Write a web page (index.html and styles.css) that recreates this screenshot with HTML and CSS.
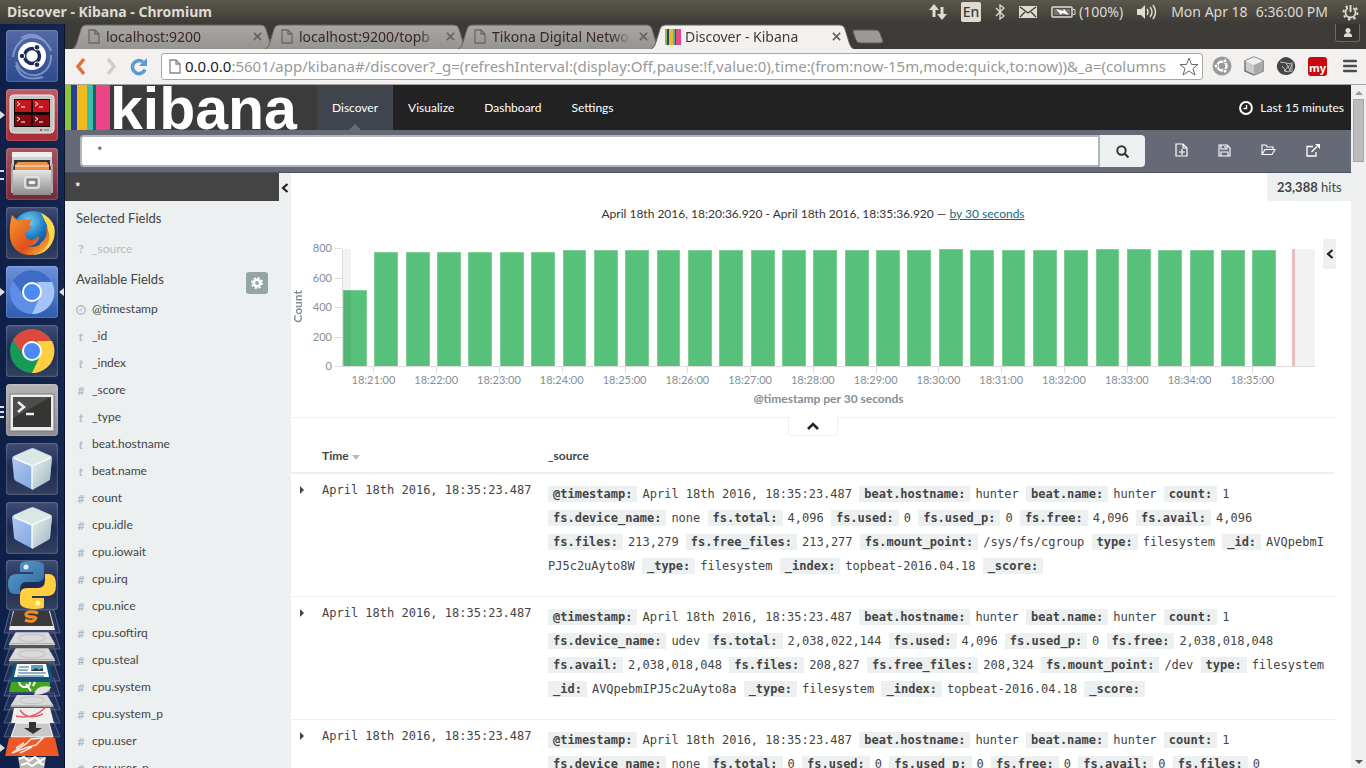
FILE: index.html
```html
<!DOCTYPE html>
<html lang="en">
<head>
<meta charset="utf-8">
<title>Discover - Kibana</title>
<link rel="stylesheet" href="styles.css">
</head>
<body>
<svg class="defs" aria-hidden="true">
  <defs>
    <linearGradient id="metal" x1="0" y1="0" x2="0" y2="1"><stop offset="0" stop-color="#e4e4e4"/><stop offset="1" stop-color="#8d8d8d"/></linearGradient>
    <linearGradient id="tabfill" x1="0" y1="0" x2="0" y2="1"><stop offset="0" stop-color="#a9a7a4"/><stop offset="1" stop-color="#96948f"/></linearGradient>
    <linearGradient id="pyb" x1="0" y1="0" x2="1" y2="1"><stop offset="0" stop-color="#5aa1d8"/><stop offset="1" stop-color="#2d6596"/></linearGradient>
    <linearGradient id="fox" x1="0" y1="0" x2="1" y2="1"><stop offset="0" stop-color="#f59a2a"/><stop offset=".6" stop-color="#e2501c"/><stop offset="1" stop-color="#f8c93a"/></linearGradient>
    <radialGradient id="globe" cx=".4" cy=".25" r=".8"><stop offset="0" stop-color="#6fd0f2"/><stop offset=".5" stop-color="#1c77bd"/><stop offset="1" stop-color="#0b2f66"/></radialGradient>
    <linearGradient id="cubel" x1="0" y1="0" x2="1" y2="1"><stop offset="0" stop-color="#b9cff2"/><stop offset="1" stop-color="#6f97dd"/></linearGradient>
    <linearGradient id="cuber" x1="0" y1="0" x2="1" y2="1"><stop offset="0" stop-color="#e8f0f0"/><stop offset="1" stop-color="#9db4bd"/></linearGradient>
    <symbol id="page" viewBox="0 0 12 15"><path d="M1 1h6l4 4v9H1zM7 1v4h4" fill="none" stroke="currentColor" stroke-width="1.300"/></symbol>
    <symbol id="x" viewBox="0 0 10 10"><path d="M1 1l8 8M9 1l-8 8" fill="none" stroke="currentColor" stroke-width="1.800"/></symbol>
    <symbol id="tabshape" viewBox="0 0 203 25" preserveAspectRatio="none"><path d="M0 25C3 24 4 21 5 18L9 5Q10 1 14 1H189Q193 1 194 5L198 18C199 21 200 24 203 25" stroke="#64625d"/></symbol>
    <symbol id="caret" viewBox="0 0 6 8"><path d="M1 0l4 4-4 4z" fill="currentColor"/></symbol>
    <symbol id="left" viewBox="0 0 8 10"><path d="M6.500 1L2 5l4.500 4" fill="none" stroke="currentColor" stroke-width="2.200"/></symbol>
    <symbol id="clock" viewBox="0 0 14 14"><circle cx="7" cy="7" r="5.900" fill="none" stroke="currentColor" stroke-width="2"/><path d="M7.500 4v3.500H4.500" fill="none" stroke="currentColor" stroke-width="1.400"/></symbol>
    <symbol id="cube" viewBox="0 0 52 52"><path d="M8 13Q26 4 27 5q1 0 18 8 1 1 1 2l-2 20q0 2-2 3L28 46q-2 1-3 0L10 38q-2-1-2-3L6 15q0-1 2-2z" fill="url(#cubel)"/><path d="M8 13l17-7q2-1 3 0l17 7q1 1 0 2l-18 8q-1 1-2 0L8 15q-1-1 0-2z" fill="#d9e8e3"/><path d="M26 23l20-9-2 22q0 1-2 2l-16 9z" fill="url(#cuber)"/><path d="M8 15l18 8 18-8M26 23v23" fill="none" stroke="#f4fbff" stroke-width="1.500"/></symbol>
    <symbol id="drive" viewBox="0 0 50 18"><path d="M8 1h34l7 12H1z" fill="#d9d9d9"/><ellipse cx="25" cy="7" rx="14" ry="4" fill="none" stroke="#bdbdbd"/><path d="M1 13h48v4H1z" fill="#555"/><path d="M1 13h48v1H1z" fill="#fff"/></symbol>
  </defs>
</svg>

<header class="panel">
  <span class="panel-title">Discover - Kibana - Chromium</span>
  <div class="tray">
    <svg width="18" height="18" viewBox="0 0 18 18"><path d="M5 1l5 6H6.500v7h-3V7H0zM13 17l-5-6h3.500V4h3v7H18z" fill="#dfdbd2"/></svg>
    <span class="lang">En</span>
    <svg width="10" height="16" viewBox="0 0 10 16"><path d="M1 4l8 8-4 3V1l4 3-8 8" fill="none" stroke="#dfdbd2" stroke-width="1.300"/></svg>
    <svg width="18" height="14" viewBox="0 0 18 14"><path d="M0 1h18v12H0z" fill="#dfdbd2"/><path d="M1 2l8 6 8-6M1 12l5-5M17 12l-5-5" fill="none" stroke="#3d3b37" stroke-width="1.300"/></svg>
    <span class="battery"><svg width="25" height="12" viewBox="0 0 25 12"><rect x="1" y="1" width="20" height="10" rx="1" fill="none" stroke="#dfdbd2" stroke-width="1.500"/><path d="M3 3h16v6H3z" fill="#77756f"/><path d="M22 3.500h2v5h-2" fill="none" stroke="#dfdbd2"/><path d="M5 3l7 2 1-2 5 6-7-2-1 2z" fill="#fff"/></svg>(100%)</span>
    <svg width="20" height="16" viewBox="0 0 20 16"><path d="M0 5h4l4-4v14l-4-4H0z" fill="#dfdbd2"/><path d="M10 5q2 3 0 6M13 3q4 5 0 10M16 1q5 7 0 14" fill="none" stroke="#dfdbd2" stroke-width="1.500"/></svg>
    <span class="date"><span>Mon Apr 18</span><span>6:36:00 PM</span></span>
    <svg width="17" height="17" viewBox="0 0 17 17"><circle cx="8.500" cy="8.500" r="5" fill="none" stroke="#dfdbd2" stroke-width="1.800"/><circle cx="8.500" cy="8.500" r="7" fill="none" stroke="#dfdbd2" stroke-width="2" stroke-dasharray="2.500 3"/><path d="M6 0h5v7H6z" fill="#4a4843"/><path d="M8.500 1v7" stroke="#dfdbd2" stroke-width="2"/></svg>
  </div>
</header>

<div class="desktop">
<aside class="launcher" aria-label="Launcher">
  <button class="tile blue" aria-label="Dash"><svg viewBox="0 0 52 52"><path d="M7 27C10 3 37 0 45 21M45 25C46 48 18 53 10 32M15 8q17-10 30 12M10 35q5 18 27 12" fill="none" stroke="#9daed8" stroke-width="2" opacity=".7"/><circle cx="26" cy="26" r="14" fill="#fff"/><circle cx="26" cy="26" r="7.500" fill="none" stroke="#1c2c5c" stroke-width="3.500"/><g fill="#1c2c5c" stroke="#fff"><circle cx="16" cy="26" r="2.800"/><circle cx="31" cy="17.300" r="2.800"/><circle cx="31" cy="34.700" r="2.800"/></g></svg></button>
  <button class="tile red run" aria-label="Terminator"><svg viewBox="0 0 52 52"><path d="M7 6h38q3 0 3 4v30q0 4-4 4H8q-4 0-4-4V10q0-4 3-4z" fill="#c5c7c2" stroke="#eee"/><path d="M8 10h36v28H8z" fill="#160405"/><path d="M9 11h16v12H9zM27 11h16v12H27z" fill="#c31720"/><path d="M9 26h16v11H9zM27 26h16v11H27z" fill="#830a10"/><path d="M11 13l3 2-3 2M15 18h4M29 13l3 2-3 2M33 18h4M11 28l3 2-3 2M15 33h4M29 28l3 2-3 2M33 33h4" stroke="#fff" fill="none"/><circle cx="35" cy="41" r="1" fill="red"/><path d="M38 40h5v2h-5z" fill="#999"/></svg></button>
  <button class="tile wine run2" aria-label="Files"><svg viewBox="0 0 52 52"><path d="M6 4h40v14H6z" fill="#d0d0d0"/><path d="M6 4h40v5H6z" fill="#eee"/><path d="M8 12h36v12H8z" fill="#333"/><path d="M9 17l3-3h29l2 3v7H9z" fill="#e8924a"/><path d="M9 18h34" stroke="#fff0d8"/><path d="M5 16h2v29H5zM45 16h2v29h-2z" fill="#aaa"/><path d="M7 22h38v25H7z" fill="url(#metal)"/><rect x="19" y="29" width="14" height="11" rx="2" fill="#aaa" stroke="#eee" stroke-width="1.500"/><path d="M22 32h8v5h-8z" fill="#eee" stroke="#444"/></svg></button>
  <button class="tile dim" aria-label="Firefox"><svg viewBox="0 0 52 52"><circle cx="27" cy="25" r="21" fill="url(#globe)"/><path d="M35 6Q52 14 48 31 43 47 27 48l8-12q8-6 6-18z" fill="#ffd94a"/><path d="M6 8l6 6q4-3 9-1l5-1-3 6 3 2-6 4q-2 5 2 8 5 3 10-3l1 3q-4 8-12 7 12 3 18-7 3-8 0-14 7 10 3 19-6 12-20 11Q7 46 4 31 3 18 6 8z" fill="url(#fox)"/></svg></button>
  <button class="tile sky run active" aria-label="Chromium"><svg viewBox="0 0 52 52"><circle cx="26" cy="26" r="22" fill="#5d8fe8"/><path d="M7 15A22 22 0 0 1 46 17H26a9 9 0 0 0-8 13z" fill="#3f6cc6"/><path d="M46 16A22 22 0 0 1 26 48l8-17q2-8-3-15z" fill="#a3c3f9"/><circle cx="26" cy="26" r="9" fill="#4a8af4" stroke="#fff" stroke-width="2"/></svg></button>
  <button class="tile dim" aria-label="Chrome"><svg viewBox="0 0 52 52"><circle cx="26" cy="26" r="22" fill="#169a57"/><path d="M7 15A22 22 0 0 1 46 17H26a9 9 0 0 0-8 13z" fill="#dc4a3f"/><path d="M46 16A22 22 0 0 1 26 48l8-17q2-8-3-15z" fill="#ffcf40"/><circle cx="26" cy="26" r="9" fill="#4a8af4" stroke="#fff" stroke-width="2"/></svg></button>
  <button class="tile grey run3" aria-label="Terminal"><svg viewBox="0 0 52 52"><path d="M4 10h44v37H4z" fill="#eee" stroke="#777"/><path d="M7 13h38v30H7z" fill="#353534"/><path d="M7 13h38L7 34z" fill="#fff" opacity=".12"/><path d="M12 18l6 5-6 5M20 30h8" fill="none" stroke="#eee" stroke-width="2.500"/></svg></button>
  <button class="tile dim" aria-label="NetBeans"><svg><use href="#cube"/></svg></button>
  <button class="tile dim" aria-label="NetBeans IDE"><svg><use href="#cube"/></svg></button>
  <button class="tile dim python" aria-label="Python"><svg viewBox="0 0 52 50"><path d="M14 5q0-4 12-4 12 0 12 5v9q0 7-7 7H20q-6 0-6 8v4H9Q2 34 2 24t8-10h17v-2H14z" fill="url(#pyb)"/><path d="M38 47q0 2-12 2-12-1-12-6v-8q0-7 7-7h11q7 0 7-8v-6h4q7 0 7 11t-8 11H26v2h12z" fill="#ffcf3f"/><circle cx="20" cy="7" r="2.500" fill="#eee"/><circle cx="32" cy="43" r="2.500" fill="#fff4a0"/></svg></button>
  <svg class="fold" width="65" height="160" viewBox="0 0 65 160" aria-label="More applications">
    <g fill="#39446c" fill-opacity=".45" stroke="#7681a5" stroke-opacity=".6"><path d="M10 1h44l6 23H4zM10 22h44l6 18H4zM10 38h44l6 18H4zM10 54h44l6 18H4zM10 69h44l6 18H4zM10 84h44l6 17H4zM10 99h44l6 15H4zM10 113h44l6 15H4z"/></g>
    <path d="M13 2h37l5 19H9z" fill="#eee"/><path d="M14 2h35l4 15H10z" fill="#3a3a3a"/><path d="M38 4q-10-3-12 1-1 3 8 3 4 1-1 4-3 1-8-1" fill="none" stroke="#f58b22" stroke-width="3"/>
    <use href="#drive" x="8" y="22" width="48" height="18"/><use href="#drive" x="8" y="38" width="48" height="18"/>
    <path d="M14 54h35l4 18H10z" fill="#145478"/><path d="M17 55h29l3 13H14z" fill="#fff"/><path d="M19 58h10M18 61h10M18 64h28M17 67h27" stroke="#1f658a"/><path d="M31 56h12v6H31z" fill="#52a5c9"/><path d="M31 62l5-3 3 2 4-2v3z" fill="#333"/>
    <path d="M11 73h39v10H9z" fill="#43a51e"/><path d="M19 73q1 5 6 5t5-5M26 75l5 7M35 73l-2 4" stroke="#fff" stroke-width="2" fill="none"/><path d="M34 86q2-11 17-8-3 8-17 8z" fill="#e2e4df"/>
    <use href="#drive" x="8" y="85" width="48" height="16"/>
    <path d="M14 99h36l4 15H11z" fill="#eee"/><path d="M16 107q16 4 29-8M20 101q7 11 23 4" stroke="#e06068" stroke-width="1.500" fill="none"/>
    <path d="M16 114h33l4 14H11z" fill="#c9c9c9" stroke="#fff"/><path d="M29 113h7v6h6l-9 6-9-6h5z" fill="#333"/>
    <path d="M9 129h46l4 18H5z" fill="#ee5825"/><path d="M12 144l14-9 5-5 12-1-7 7-8 2zM20 144l12-6M16 139l8-5" stroke="#fbe6da" stroke-width="1.500" fill="none"/>
    <path d="M18 148h28l-2 12H20z" fill="#b8b8b4"/><path d="M19 150l5-2 5 4 6-4 5 4 5-3M21 156l6-2 5 3 6-4 6 3" stroke="#fff" stroke-width="2" fill="none"/><path d="M0 135l5 4-5 4z" fill="#ddd"/>
  </svg>
</aside>

<div class="browser">
  <div class="tabstrip">
    <div class="tab"><svg class="shape" fill="url(#tabfill)"><use href="#tabshape"/></svg><svg class="fav"><use href="#page"/></svg><span class="tab-name">localhost:9200</span><button class="close" aria-label="Close"><svg><use href="#x"/></svg></button></div>
    <div class="tab"><svg class="shape" fill="url(#tabfill)"><use href="#tabshape"/></svg><svg class="fav"><use href="#page"/></svg><span class="tab-name">localhost:9200/topb</span><button class="close" aria-label="Close"><svg><use href="#x"/></svg></button></div>
    <div class="tab"><svg class="shape" fill="url(#tabfill)"><use href="#tabshape"/></svg><svg class="fav"><use href="#page"/></svg><span class="tab-name">Tikona Digital Netwo</span><button class="close" aria-label="Close"><svg><use href="#x"/></svg></button></div>
    <div class="tab current"><svg class="shape" fill="#f2f1f0"><use href="#tabshape"/></svg><svg class="fav wide" viewBox="0 0 16 16"><path d="M0 0h2v16H0z" fill="#8ac43f"/><path d="M2 0h2v16H2z" fill="#2b3f91"/><path d="M4 0h4v16H4z" fill="#f2b91c"/><path d="M8 0h2v16H8z" fill="#3bbeb2"/><path d="M10 0h1v16h-1z" fill="#0a6a60"/><path d="M11 0h5v16h-5z" fill="#ea4589"/></svg><span class="tab-name">Discover - Kibana</span><button class="close" aria-label="Close"><svg><use href="#x"/></svg></button></div>
    <button class="newtab" aria-label="New tab"><svg width="32" height="15" viewBox="0 0 32 15"><path d="M2 1h22q3 0 4 3l3 8q0 2-2 2H8q-3 0-4-3L1 3q0-2 1-2z" fill="#9b9994" stroke="#5c5a55"/></svg></button>
    <button class="profile" aria-label="Profile"><svg width="10" height="10" viewBox="0 0 10 10"><circle cx="5" cy="2.500" r="2.500" fill="#dfdbd2"/><path d="M1 9V7q1-2 4-2t4 2v2z" fill="#dfdbd2"/></svg></button>
  </div>
  <div class="toolbar">
    <button aria-label="Back"><svg width="12" height="19" viewBox="0 0 12 19"><path d="M9 2L3 9.500l6 7.500" fill="none" stroke="#e2703a" stroke-width="3.500"/></svg></button>
    <button aria-label="Forward"><svg width="12" height="19" viewBox="0 0 12 19"><path d="M2 2l6 7.500L2 17" fill="none" stroke="#cfcdc9" stroke-width="3.500"/></svg></button>
    <button aria-label="Reload"><svg width="18" height="19" viewBox="0 0 18 19"><path d="M15 12.500A6.500 6.500 0 1 1 13 5" fill="none" stroke="#5b9bd3" stroke-width="3.500"/><path d="M17 1v8H9z" fill="#5b9bd3"/></svg></button>
    <div class="omnibox"><svg class="fav" width="12" height="15"><use href="#page"/></svg><div class="url"><b>0.0.0.0</b>:5601/app/kibana#/discover?_g=(refreshInterval:(display:Off,pause:!f,value:0),time:(from:now-15m,mode:quick,to:now))&amp;_a=(columns</div><svg width="20" height="19" viewBox="0 0 20 19"><path d="M10 1l2.500 6.500H19l-5 4 2 6.500-6-4-6 4 2-6.500-5-4h6.500z" fill="#fff" stroke="#666"/></svg></div>
    <div class="extensions">
      <svg width="20" height="20" viewBox="0 0 20 20"><circle cx="10" cy="10" r="9.500" fill="#999"/><circle cx="10" cy="10" r="4.500" fill="none" stroke="#fff" stroke-width="2.500"/><g fill="#fff" stroke="#999"><circle cx="4" cy="10" r="2"/><circle cx="13" cy="4.800" r="2"/><circle cx="13" cy="15.200" r="2"/></g></svg>
      <svg width="20" height="20" viewBox="0 0 20 20"><path d="M1 5l9-4 9 4v10l-9 4-9-4z" fill="#ccc" stroke="#777" stroke-width="1.500"/><path d="M1 5l9 4 9-4-9-4z" fill="#eee"/><path d="M10 9v10l9-4V5z" fill="#aaa"/></svg>
      <svg width="20" height="20" viewBox="0 0 20 20"><path d="M5 3q5-4 10 0 5 3 4 9-2 7-9 7t-9-7q-1-5 4-9z" fill="#444"/><path d="M4 6l12 2-3 8-5-1 6-6M6 10l5 6M10 7l5 9M16 6v10" stroke="#bbb" fill="none"/></svg>
      <span class="my">my</span>
      <svg width="14" height="14" viewBox="0 0 14 14"><path d="M1 2h12M1 7h12M1 12h12" stroke="#4c4c4c" stroke-width="2.500" stroke-linecap="round"/></svg>
    </div>
  </div>

  <div class="viewport">
  <div class="app">
    <nav class="navbar">
      <a class="logo" href="#" aria-label="Kibana"><span class="stripes"></span><span class="word">kibana</span></a>
      <a class="nav on" href="#">Discover</a><a class="nav" href="#">Visualize</a><a class="nav" href="#">Dashboard</a><a class="nav" href="#">Settings</a>
      <button class="range"><svg width="14" height="14"><use href="#clock"/></svg>Last 15 minutes</button>
    </nav>
    <form class="query">
      <input type="text" value="*" aria-label="Search"><button class="go" type="button" aria-label="Submit search"><svg width="13" height="13" viewBox="0 0 13 13"><circle cx="5.500" cy="5.500" r="4.200" fill="none" stroke="#333" stroke-width="2"/><path d="M8.500 8.500l4 4" stroke="#333" stroke-width="2.200"/></svg></button>
      <div class="actions">
        <button type="button" aria-label="New search"><svg width="13" height="14" viewBox="0 0 13 14"><path d="M1 1h7l4 4v8H1zM8 1v4h4M7 6v6M4 9h6" fill="none" stroke="#fff" stroke-width="1.200"/></svg></button>
        <button type="button" aria-label="Save search"><svg width="13" height="13" viewBox="0 0 13 13"><path d="M1 1h8l3 3v8H1zM3 1v4h6V1M3 12V8h7v4M7 2v2" fill="none" stroke="#fff" stroke-width="1.100"/></svg></button>
        <button type="button" aria-label="Load search"><svg width="15" height="12" viewBox="0 0 15 12"><path d="M1 10V1h4l1 2h6v2M1 10.500l3-5h10l-3 5z" fill="none" stroke="#fff" stroke-width="1.100"/></svg></button>
        <button type="button" aria-label="Share"><svg width="14" height="13" viewBox="0 0 14 13"><path d="M7 2.500H1V12h9V8M5.500 8L11 2.500" fill="none" stroke="#fff" stroke-width="1.300"/><path d="M9 0h5v5z" fill="#fff"/></svg></button>
      </div>
    </form>
    <div class="columns">
      <aside class="sidebar">
        <div class="fields">
          <div class="index">*</div>
          <h2>Selected Fields</h2>
          <ul><li class="muted"><i class="q">?</i>_source</li></ul>
          <div class="available"><h2>Available Fields</h2><button aria-label="Field settings"><svg width="12" height="12" viewBox="0 0 12 12"><circle cx="6" cy="6" r="3.200" fill="none" stroke="#fff" stroke-width="2.600"/><circle cx="6" cy="6" r="5" fill="none" stroke="#fff" stroke-width="2" stroke-dasharray="2 1.930"/></svg></button></div>
          <ul>
            <li><i><svg width="10" height="10"><use href="#clock"/></svg></i>@timestamp</li>
            <li><i>t</i>_id</li><li><i>t</i>_index</li><li><i class="n">#</i>_score</li><li><i>t</i>_type</li><li><i>t</i>beat.hostname</li><li><i>t</i>beat.name</li>
            <li><i class="n">#</i>count</li><li><i class="n">#</i>cpu.idle</li><li><i class="n">#</i>cpu.iowait</li><li><i class="n">#</i>cpu.irq</li><li><i class="n">#</i>cpu.nice</li><li><i class="n">#</i>cpu.softirq</li><li><i class="n">#</i>cpu.steal</li><li><i class="n">#</i>cpu.system</li><li><i class="n">#</i>cpu.system_p</li><li><i class="n">#</i>cpu.user</li><li><i class="n">#</i>cpu.user_p</li>
          </ul>
        </div>
        <button class="collapse" aria-label="Collapse sidebar"><svg width="8" height="10"><use href="#left"/></svg></button>
      </aside>
      <main class="results">
        <div class="hits"><b>23,388</b> hits</div>
        <div class="span">April 18th 2016, 18:20:36.920 - April 18th 2016, 18:35:36.920 — <a href="#">by 30 seconds</a></div>
        <section class="chart">
          <div class="ytitle"><span>Count</span></div>
          <div class="yaxis"><span>800</span><span>600</span><span>400</span><span>200</span><span>0</span></div>
          <div class="plotcol">
            <div class="plot" id="plot"><div class="early"></div><div class="late"></div></div>
            <div class="xaxis"><span>18:21:00</span><span>18:22:00</span><span>18:23:00</span><span>18:24:00</span><span>18:25:00</span><span>18:26:00</span><span>18:27:00</span><span>18:28:00</span><span>18:29:00</span><span>18:30:00</span><span>18:31:00</span><span>18:32:00</span><span>18:33:00</span><span>18:34:00</span><span>18:35:00</span></div>
            <div class="xtitle">@timestamp per 30 seconds</div>
          </div>
          <button class="legend" aria-label="Toggle legend"><svg width="8" height="10"><use href="#left"/></svg></button>
        </section>
        <div class="fold-row"><button aria-label="Collapse chart"><svg width="12" height="8" viewBox="0 0 12 8"><path d="M1 7l5-5 5 5" fill="none" stroke="#222" stroke-width="2.600"/></svg></button></div>
        <table>
          <colgroup><col class="c1"><col class="c2"><col></colgroup>
          <thead><tr><th></th><th>Time <svg width="8" height="5" viewBox="0 0 8 5"><path d="M0 0h8L4 5z" fill="#b4bcc2"/></svg></th><th>_source</th></tr></thead>
          <tbody>
          <tr><td><svg width="6" height="8"><use href="#caret"/></svg></td><td>April 18th 2016, 18:35:23.487</td><td><dl><dt>@timestamp:</dt><dd>April 18th 2016, 18:35:23.487</dd> <dt>beat.hostname:</dt><dd>hunter</dd> <dt>beat.name:</dt><dd>hunter</dd> <dt>count:</dt><dd>1</dd> <dt>fs.device_name:</dt><dd>none</dd> <dt>fs.total:</dt><dd>4,096</dd> <dt>fs.used:</dt><dd>0</dd> <dt>fs.used_p:</dt><dd>0</dd> <dt>fs.free:</dt><dd>4,096</dd> <dt>fs.avail:</dt><dd>4,096</dd> <dt>fs.files:</dt><dd>213,279</dd> <dt>fs.free_files:</dt><dd>213,277</dd> <dt>fs.mount_point:</dt><dd>/sys/fs/cgroup</dd> <dt>type:</dt><dd>filesystem</dd> <dt>_id:</dt><dd>AVQpebmIPJ5c2uAyto8W</dd> <dt>_type:</dt><dd>filesystem</dd> <dt>_index:</dt><dd>topbeat-2016.04.18</dd> <dt>_score:</dt></dl></td></tr>
          <tr><td><svg width="6" height="8"><use href="#caret"/></svg></td><td>April 18th 2016, 18:35:23.487</td><td><dl><dt>@timestamp:</dt><dd>April 18th 2016, 18:35:23.487</dd> <dt>beat.hostname:</dt><dd>hunter</dd> <dt>beat.name:</dt><dd>hunter</dd> <dt>count:</dt><dd>1</dd> <dt>fs.device_name:</dt><dd>udev</dd> <dt>fs.total:</dt><dd>2,038,022,144</dd> <dt>fs.used:</dt><dd>4,096</dd> <dt>fs.used_p:</dt><dd>0</dd> <dt>fs.free:</dt><dd>2,038,018,048</dd> <dt>fs.avail:</dt><dd>2,038,018,048</dd> <dt>fs.files:</dt><dd>208,827</dd> <dt>fs.free_files:</dt><dd>208,324</dd> <dt>fs.mount_point:</dt><dd>/dev</dd> <dt>type:</dt><dd>filesystem</dd> <dt>_id:</dt><dd>AVQpebmIPJ5c2uAyto8a</dd> <dt>_type:</dt><dd>filesystem</dd> <dt>_index:</dt><dd>topbeat-2016.04.18</dd> <dt>_score:</dt></dl></td></tr>
          <tr><td><svg width="6" height="8"><use href="#caret"/></svg></td><td>April 18th 2016, 18:35:23.487</td><td><dl><dt>@timestamp:</dt><dd>April 18th 2016, 18:35:23.487</dd> <dt>beat.hostname:</dt><dd>hunter</dd> <dt>beat.name:</dt><dd>hunter</dd> <dt>count:</dt><dd>1</dd> <dt>fs.device_name:</dt><dd>none</dd> <dt>fs.total:</dt><dd>0</dd> <dt>fs.used:</dt><dd>0</dd> <dt>fs.used_p:</dt><dd>0</dd> <dt>fs.free:</dt><dd>0</dd> <dt>fs.avail:</dt><dd>0</dd> <dt>fs.files:</dt><dd>0</dd></dl></td></tr>
          </tbody>
        </table>
      </main>
    </div>
  </div>
  <div class="scrollbar"><span class="arrow"></span><span class="thumb"></span><span class="arrow down"></span></div>
  </div>
</div>
</div>
<script src="chart.js"></script>
</body>
</html>
```
FILE: styles.css
```css
* { box-sizing: border-box; }
body { margin: 0; height: 100vh; overflow: hidden; display: flex; flex-direction: column; font: 13px/20px Lato, sans-serif; color: #444; background: #fff; }
button { border: 0; background: none; padding: 0; margin: 0; font: inherit; color: inherit; display: flex; align-items: center; justify-content: center; }
svg { flex: none; }
h2, ul, dl, dd { margin: 0; padding: 0; }
.defs { position: absolute; width: 0; height: 0; }

/* Desktop panel */
.panel { flex: none; height: 24px; display: flex; align-items: center; justify-content: space-between; padding: 0 7px; background: linear-gradient(#5a574c, #3d3b37); color: #dfdbd2; font: 14px/24px "Noto Sans", sans-serif; }
.panel-title { font-weight: 700; }
.tray { display: flex; align-items: center; gap: 14px; }
.lang { width: 20px; height: 20px; background: #dfdbd2; color: #3d3b37; border-radius: 2px; line-height: 20px; text-align: center; font-weight: 500; }
.battery { display: flex; align-items: center; gap: 3px; }
.date { display: flex; gap: 8px; }

.desktop { flex: 1; min-height: 0; display: flex; }
.launcher { flex: none; width: 65px; padding-top: 6px; display: flex; flex-direction: column; align-items: center; gap: 7px; background: linear-gradient(90deg, #0e2047, #15264f); overflow: hidden; border-right: 1px solid #0a1228; }
.tile { flex: none; position: relative; width: 52px; height: 52px; border-radius: 4px; box-shadow: inset 0 0 2px #ffffff88; }
.tile svg { width: 52px; height: 52px; }
.blue { background: linear-gradient(#5568a5, #2e4b92); }
.red { background: linear-gradient(#c05c63, #a82c35); }
.wine { background: linear-gradient(#a85560, #762734); }
.dim { background: linear-gradient(#414c72, #1d2b55 50%, #34405f); }
.sky { background: linear-gradient(#6d91d9, #2f5cb0); }
.grey { background: linear-gradient(#b5b5b7, #8e8e90); }
.tile.python { height: 50px; margin-top: -1px; }
.tile.python svg { height: 50px; }
.run::before, .run2::before, .run3::before { content: ""; position: absolute; left: -6px; top: 22px; border: 4px solid transparent; border-left: 5px solid #ddd; border-right: 0; }
.run2::before { border: 0; width: 4px; height: 6px; border-top: 2px solid #ddd; border-bottom: 2px solid #ddd; }
.run3::before { border: 0; width: 4px; height: 12px; background: repeating-linear-gradient(#ddd 0 2px, transparent 2px 5px); }
.active::after { content: ""; position: absolute; right: -6px; top: 22px; border: 4px solid transparent; border-right: 5px solid #ddd; border-left: 0; }
.fold { margin-top: -8px; }

/* Browser chrome */
.browser { flex: 1; min-width: 0; display: flex; flex-direction: column; }
.tabstrip { flex: none; height: 25px; display: flex; background: #3c3b37; padding: 0 6px 0 7px; font: 14px/25px "Noto Sans", sans-serif; color: #3a2626; }
.tab { position: relative; width: 203px; margin-right: -10px; display: flex; align-items: center; padding: 0 13px 0 16px; }
.tab > * { position: relative; }
.tab .shape { position: absolute; inset: 0; width: 100%; height: 100%; }
.tab .fav { width: 12px; height: 15px; color: #6b6966; margin-right: 6px; }
.tab .fav.wide { width: 16px; height: 16px; margin: 0 4px 0 -2px; }
.tab-name { flex: 1; overflow: hidden; white-space: nowrap; -webkit-mask-image: linear-gradient(90deg, #000 85%, transparent); mask-image: linear-gradient(90deg, #000 85%, transparent); }
.close { width: 10px; color: #6a605c; margin-left: 6px; }
.close svg { width: 9px; height: 9px; }
.current { color: #3c3b37; z-index: 1; }
.newtab { margin-left: 8px; }
.profile { margin-left: auto; width: 25px; height: 18px; align-self: flex-start; background: #35342f; border: 1px solid #6b6a64; border-top: 0; border-radius: 0 0 3px 3px; }
.toolbar { flex: none; height: 36px; display: flex; align-items: center; padding: 0 9px 1px 6px; background: #f2f1f0; border-bottom: 1px solid #a5a29e; }
.toolbar > button { width: 20px; margin-right: 11px; height: 26px; }
.toolbar > button:nth-child(3) { margin: 0 12px 0 -4px; }
.omnibox { flex: 1; min-width: 0; height: 27px; display: flex; align-items: center; padding: 0 3px 0 4px; background: #fff; border: 1px solid #aaa7a3; border-radius: 3px; }
.omnibox .fav { color: #888; margin: 0 4px 0 3px; }
.url { flex: 1; overflow: hidden; white-space: nowrap; font: 15px/25px "Noto Sans", sans-serif; color: #999; }
.url b { font-weight: 400; color: #222; }
.extensions { display: flex; align-items: center; gap: 12px; margin-left: 9px; }
.extensions svg:last-child { margin: 0 0 0 4px; }
.my { width: 19px; height: 19px; border-radius: 3px; background: #c8070f; color: #fff; font: 700 11px/21px "Noto Sans", sans-serif; text-align: center; }

.viewport { flex: 1; min-height: 0; display: flex; }
.app { flex: 1; min-width: 0; display: flex; flex-direction: column; }
.scrollbar { flex: none; width: 15px; background: #f0f0f0; display: flex; flex-direction: column; align-items: center; }
.arrow { border: 4px solid transparent; border-bottom-color: #999; border-top: 0; margin: 6px 0 4px; }
.arrow.down { border-top: 4px solid #555; border-bottom: 0; margin-top: auto; }
.thumb { width: 11px; height: 63px; background: #bcbcbc; border: 1px solid #a5a5a5; }

/* Kibana navigation */
.navbar { flex: none; height: 45px; display: flex; background: #222; font-size: 12px; line-height: 46px; overflow: hidden; }
.logo { width: 252px; display: flex; background: #3b3b3b; color: #fff; text-decoration: none; }
.stripes { width: 45px; background: linear-gradient(90deg, #8ac43f 0 6px, #2b3f91 6px 12px, #f2b91c 12px 22px, #3bbeb2 22px 28px, #0a6a60 28px 31px, #ea4589 31px); }
.word { font: 700 59px/48px "Liberation Sans", sans-serif; }
.nav { color: #fff; text-decoration: none; padding: 0 15px; position: relative; }
.nav.on { background: #3f444d; }
.nav.on::after { content: ""; position: absolute; left: 50%; bottom: 0; margin-left: -6px; border: 6px solid transparent; border-bottom-color: #656a76; border-top: 0; }
.range { margin-left: auto; margin-right: 7px; gap: 7px; color: #fff; }
.query { flex: none; display: flex; height: 43px; padding: 5px 16px 5px 15px; background: #656a76; border-bottom: 1px solid #4d5060; }
.query input { flex: 1; min-width: 0; border: 2px solid #b0b6bd; border-radius: 4px 0 0 4px; padding: 0 15px; font: 13px/20px Lato, sans-serif; color: #444; background: #fff; }
.go { width: 45px; background: #ecf0f1; border-radius: 0 4px 4px 0; }
.actions { display: flex; width: 190px; justify-content: space-between; padding: 0 15px 2px 30px; }

/* Sidebar */
.columns { flex: 1; min-height: 0; display: flex; overflow: hidden; }
.sidebar { flex: none; width: 226px; display: flex; background: #ecf0f1; }
.fields { flex: 1; }
.index { height: 28px; background: #444; color: #fff; padding: 0 10px; line-height: 28px; font-weight: 700; }
.fields h2 { font: 13px/20px Lato, sans-serif; padding: 7px 11px 8px; }
.fields ul { list-style: none; font-size: 12px; }
.fields li { height: 27px; line-height: 26px; display: flex; padding-left: 11px; }
.fields i { width: 10px; margin-right: 6px; text-align: center; font-weight: 700; color: #b4bcc2; display: flex; align-items: center; justify-content: center; }
.fields i.n, .fields i.q { font-style: normal; }
.fields li.muted { color: #b4bcc2; height: 26px; }
.available { display: flex; justify-content: space-between; height: 34px; }
.available button { width: 22px; height: 22px; margin: 10px 11px 0 0; border-radius: 3px; background: #95a5a6; }
.collapse { width: 12px; height: 30px; color: #222; }

/* Results */
.results { flex: 1; min-width: 0; padding-right: 16px; }
.hits { width: 84px; height: 28px; margin: 0 -16px 0 auto; background: #ecf0f1; border-radius: 0 0 0 4px; line-height: 28px; padding-left: 10px; white-space: nowrap; }
.span { text-align: center; font-size: 12px; line-height: 20px; padding: 3px 0 0; color: #333; }
.span a { color: #156a7e; }
.chart { display: flex; color: #848e96; font-size: 11px; line-height: 16px; margin-top: 15px; height: 178px; }
.ytitle { width: 14px; height: 134px; display: flex; align-items: center; justify-content: center; font-size: 12px; font-weight: 700; }
.ytitle span { writing-mode: vertical-rl; transform: rotate(180deg); }
.yaxis { width: 37px; height: 134px; display: flex; flex-direction: column; justify-content: space-between; text-align: right; margin-top: 1px; padding-right: 10px; font-size: 11px; }
.yaxis span { position: relative; }
.yaxis span::after { content: ""; position: absolute; right: -10px; top: 8px; width: 7px; height: 1px; background: #ddd; }
.plotcol { flex: 1; min-width: 0; padding-top: 10px; }
.plot { position: relative; height: 118px; display: flex; align-items: flex-end; border-left: 1px solid #ddd; border-bottom: 1px solid #ddd; }
.slot { flex: 1; height: 100%; display: flex; align-items: flex-end; }
.bar { width: 76%; background: #57c17b; border: 1px solid #7dce97; border-bottom: 0; }
.early, .late { position: absolute; top: 0; bottom: 0; background: #0000000d; }
.early { left: 0; width: 8px; z-index: 1; }
.late { right: 0; width: 23px; border-left: 3px solid #e9bcbc; }
.xaxis { display: flex; padding-right: 3.226%; padding-top: 5px; }
.xaxis span { flex: 1; text-align: center; position: relative; white-space: nowrap; }
.xaxis span::before { content: ""; position: absolute; left: 50%; top: -5px; height: 6px; width: 1px; background: #ddd; }
.xtitle { text-align: center; font-weight: 700; font-size: 12px; padding-top: 3px; }
.legend { width: 13px; height: 30px; background: #ecf0f1; margin: 0 -1px 0 8px; color: #222; border-radius: 3px 0 0 3px; }
.fold-row { border-top: 1px solid #ecf0f1; height: 22px; }
.fold-row button { width: 50px; height: 19px; margin: -1px auto 0; background: #fff; border: 1px solid #ecf0f1; border-top: 0; border-radius: 0 0 4px 4px; }
table { width: 100%; table-layout: fixed; border-collapse: collapse; font: 12px/16px "DejaVu Sans Mono", monospace; }
.c1 { width: 23px; }
.c2 { width: 226px; }
th { font: 700 12px/16px Lato, sans-serif; text-align: left; padding: 8px; height: 34px; border-bottom: 2px solid #ecf0f1; }
td { vertical-align: top; padding: 8px; white-space: nowrap; border-top: 1px solid #ecf0f1; }
td:last-child { white-space: normal; padding-bottom: 18px; }
dl { line-height: 24px; word-break: break-all; }
dt, dd { display: inline; }
dt { font-weight: 700; background: #ecf0f1; padding: 1px 5px; margin-right: 5px; white-space: nowrap; }
```
FILE: chart.js
```js
// Hits per 30 second bucket; the last bucket is empty.
const counts = [520, 780, 779, 777, 779, 780, 783, 796, 793, 792, 792, 792, 792, 792, 792, 792, 792, 792, 793, 797, 796, 795, 793, 796, 798, 797, 794, 794, 794, 794, 0];
const plot = document.getElementById('plot');
for (const count of counts) {
  const slot = document.createElement('div');
  slot.className = 'slot';
  if (count) {
    const bar = document.createElement('div');
    bar.className = 'bar';
    bar.style.height = count / 8 + '%';
    slot.append(bar);
  }
  plot.append(slot);
}
```
